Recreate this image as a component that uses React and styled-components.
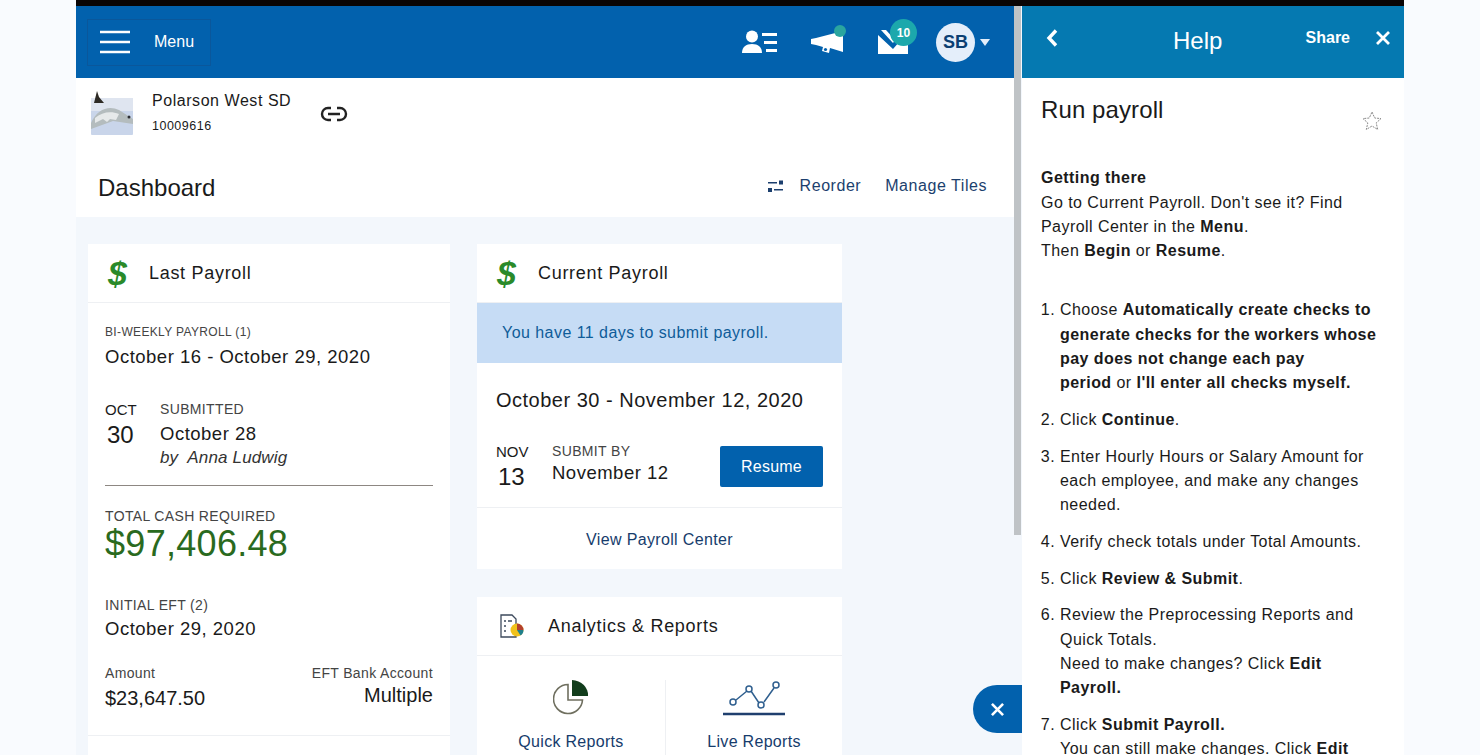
import React from 'react';
import styled, { createGlobalStyle } from 'styled-components';

const GlobalStyle = createGlobalStyle`
	html, body {
		margin: 0;
		height: 100%;
		overflow: hidden;
		background: #f9fbfe;
		font-family: 'Liberation Sans', Arial, sans-serif;
		color: #1a1a1a;
	}
	* {
		box-sizing: border-box;
	}
`;

const Frame = styled.div`
	position: relative;
	width: 1328px;
	height: 755px;
	margin-left: 76px;
	overflow: hidden;
	background: #f3f7fc;
`;
const TopStrip = styled.div`
	height: 6px;
	background: #0a0505;
`;
const Columns = styled.div`
	display: flex;
	height: 749px;
`;
const Main = styled.div`
	width: 938px;
	flex-shrink: 0;
`;
const ScrollTrack = styled.div`
	width: 8px;
	flex-shrink: 0;
	background: #f3f7fc;
`;
const ScrollThumb = styled.div`
	width: 7px;
	height: 529px;
	background: #bfc3c6;
`;

const Header = styled.header`
	display: flex;
	align-items: center;
	justify-content: space-between;
	height: 72px;
	padding: 0 24px 0 11px;
	background: #0261ad;
	color: #fff;
`;
const MenuButton = styled.div`
	display: flex;
	align-items: center;
	gap: 24px;
	width: 124px;
	height: 47px;
	padding-left: 12px;
	border: 1px solid #0a579b;
	font-size: 16px;
`;
const HeaderIcons = styled.div`
	display: flex;
	align-items: center;
`;
const IconSlot = styled.div`
	position: relative;
	display: flex;
	margin-right: ${(p) => p.$gap}px;
`;
const Badge = styled.span`
	position: absolute;
	top: -11px;
	right: -9px;
	display: flex;
	align-items: center;
	justify-content: center;
	width: 27px;
	height: 27px;
	border-radius: 50%;
	background: #1ca8ac;
	font-size: 12px;
	font-weight: bold;
`;
const Dot = styled.span`
	position: absolute;
	top: -6px;
	right: -3px;
	width: 12px;
	height: 12px;
	border-radius: 50%;
	background: #2aa59f;
`;
const Avatar = styled.div`
	display: flex;
	align-items: center;
	justify-content: center;
	width: 39px;
	height: 39px;
	margin-right: 5px;
	border-radius: 50%;
	background: #e4eefa;
	color: #0b3f73;
	font-size: 18px;
	font-weight: bold;
`;
const Caret = styled.span`
	width: 0;
	height: 0;
	border-left: 5px solid transparent;
	border-right: 5px solid transparent;
	border-top: 7px solid #e4eefa;
`;

const TitleBlock = styled.div`
	height: 139px;
	background: #fff;
`;
const Company = styled.div`
	display: flex;
	align-items: center;
	height: 72px;
	padding-left: 15px;
`;
const CompanyText = styled.div`
	margin-left: 19px;
	margin-right: 29px;
`;
const CompanyName = styled.div`
	margin-top: -3px;
	font-size: 16px;
	line-height: 20px;
	letter-spacing: 0.55px;
`;
const CompanyId = styled.div`
	margin-top: 7px;
	font-size: 12.5px;
	line-height: 16px;
	letter-spacing: 0.5px;
`;
const DashboardRow = styled.div`
	display: flex;
	align-items: center;
	justify-content: space-between;
	height: 67px;
	padding: 4px 27px 0 22px;
`;
const PageTitle = styled.h1`
	margin: 4px 0 0;
	font-size: 24px;
	font-weight: 400;
`;
const Actions = styled.div`
	display: flex;
	align-items: center;
	color: #1c3f6e;
	font-size: 16px;
	letter-spacing: 0.55px;
`;
const ActionLink = styled.span`
	margin-left: ${(p) => p.$left}px;
`;

const Board = styled.div`
	display: flex;
	align-items: flex-start;
	gap: 27px;
	padding: 27px 0 0 12px;
`;
const Stack = styled.div`
	display: flex;
	flex-direction: column;
	gap: 28px;
`;
const Card = styled.section`
	width: ${(p) => p.$width}px;
	background: #fff;
`;
const CardHead = styled.div`
	display: flex;
	align-items: center;
	gap: ${(p) => p.$gap || 21}px;
	height: 59px;
	padding-left: ${(p) => p.$left || 20}px;
	border-bottom: 1px solid #eef0f3;
	font-size: 18px;
	letter-spacing: 0.7px;
`;
const DollarSign = styled.span`
	width: 20px;
	font-size: 34px;
	font-weight: bold;
	font-style: italic;
	line-height: 38px;
	color: #2a8a2a;
	letter-spacing: 0;
`;
const Body = styled.div`
	padding: 21px 17px 0;
`;
const Caption = styled.div`
	margin-top: ${(p) => p.$top || 0}px;
	font-size: ${(p) => p.$size || 14}px;
	line-height: 16px;
	letter-spacing: 0.35px;
	color: #444;
`;
const DateLine = styled.div`
	margin-top: ${(p) => p.$top || 0}px;
	padding-left: ${(p) => p.$pad || 0}px;
	font-size: ${(p) => p.$size || 18.5}px;
	line-height: 24px;
	letter-spacing: 0.5px;
`;
const DateRow = styled.div`
	display: flex;
	align-items: flex-start;
	margin-top: ${(p) => p.$top || 0}px;
`;
const Day = styled.div`
	width: ${(p) => p.$width || 55}px;
	flex-shrink: 0;
`;
const Month = styled.div`
	font-size: 15px;
	line-height: 18px;
`;
const DayNumber = styled.div`
	margin-top: 2px;
	padding-left: 2px;
	font-size: 24px;
	line-height: 28px;
`;
const ByLine = styled.div`
	margin-top: 1px;
	font-size: 17px;
	font-style: italic;
	line-height: 22px;
	letter-spacing: 0.15px;
	color: #333;
`;
const Rule = styled.hr`
	margin: 16px 0 22px;
	border: 0;
	border-top: 1px solid #8d8782;
`;
const Total = styled.div`
	font-size: 36px;
	line-height: 40px;
	color: #2a6a1e;
	letter-spacing: 0.3px;
`;
const SplitRow = styled.div`
	display: flex;
	justify-content: space-between;
	margin-top: 24px;
	height: 70px;
`;
const RightCol = styled.div`
	text-align: right;
`;
const Amount = styled.div`
	margin-top: ${(p) => p.$top || 0}px;
	font-size: 20px;
	line-height: 24px;
`;
const Divider = styled.div`
	height: 1px;
	background: #eef0f3;
	margin-top: ${(p) => p.$top || 0}px;
`;
const LowerStub = styled.div`
	height: 30px;
`;
const Banner = styled.div`
	display: flex;
	align-items: center;
	height: 60px;
	padding-left: 25px;
	background: #c6dcf5;
	color: #0f5c99;
	font-size: 16px;
	letter-spacing: 0.45px;
`;
const SubmitRow = styled.div`
	display: flex;
	align-items: flex-start;
	justify-content: space-between;
	padding: 0 19px;
	margin-top: 31px;
`;
const SubmitInfo = styled.div`
	display: flex;
`;
const ResumeButton = styled.button`
	width: 103px;
	height: 41px;
	margin-top: 3px;
	border: 0;
	border-radius: 2px;
	background: #0261ad;
	color: #fff;
	font: inherit;
	font-size: 16px;
	letter-spacing: 0.2px;
`;
const CardLink = styled.div`
	display: flex;
	align-items: center;
	justify-content: center;
	height: 61px;
	padding-top: 2px;
	color: #163c6c;
	font-size: 16px;
	letter-spacing: 0.35px;
`;
const Reports = styled.div`
	display: grid;
	grid-template-columns: 188px 1fr;
	height: 100px;
	padding-top: 24px;
`;
const ReportCell = styled.div`
	display: flex;
	flex-direction: column;
	align-items: center;
	color: #163c6c;
	font-size: 16px;
	letter-spacing: 0.3px;
	border-left: ${(p) => (p.$line ? '1px solid #eef0f3' : '0')};
`;
const ReportLabel = styled.div`
	margin-top: 17px;
`;

const Help = styled.aside`
	width: 382px;
	flex-shrink: 0;
	background: #fff;
`;
const HelpHead = styled.div`
	position: relative;
	display: flex;
	align-items: center;
	justify-content: space-between;
	height: 72px;
	padding: 0 14px 8px 24px;
	background: #0579b1;
	color: #fff;
`;
const HelpTitle = styled.div`
	position: absolute;
	left: 151px;
	top: 21px;
	font-size: 24px;
`;
const HelpTools = styled.div`
	display: flex;
	align-items: center;
	gap: 26px;
	font-size: 16px;
	font-weight: bold;
`;
const HelpBody = styled.div`
	padding: 18px 19px 0;
	font-size: 16px;
	line-height: 24.3px;
	letter-spacing: 0.45px;
`;
const HelpTopic = styled.div`
	display: flex;
	justify-content: space-between;
`;
const TopicTitle = styled.h2`
	margin: 0;
	font-size: 24px;
	font-weight: 400;
	line-height: 28px;
	letter-spacing: 0.1px;
`;
const StarWrap = styled.div`
	margin: 15px 3px 0 0;
`;
const Intro = styled.p`
	margin: 28px 0 0;
`;
const Steps = styled.ol`
	margin: 35px 0 0;
	padding: 0 0 0 19px;
`;
const Step = styled.li`
	margin-bottom: 12.4px;
`;
const FloatClose = styled.div`
	position: absolute;
	left: 897px;
	top: 685px;
	display: flex;
	align-items: center;
	justify-content: center;
	width: 49px;
	height: 48px;
	border-radius: 24px 0 0 24px;
	background: #0261ad;
`;

const Burger = () => (
	<svg width="30" height="24" viewBox="0 0 30 24">
		<path d="M0 2h30M0 12h30M0 22h30" stroke="#fff" strokeWidth="2.6" />
	</svg>
);
const Thumb = () => (
	<svg width="42" height="46" viewBox="0 0 42 46">
		<rect y="7" width="42" height="37" rx="1" fill="#c9d5ea" />
		<rect y="7" width="42" height="13" fill="#dfe5f0" />
		<path d="M0 32c6-14 18-18 28-13l14 9v5L22 30 0 38z" fill="#b4bcbe" />
		<path d="M4 27c7-6 16-7 24-4l-3 6-6-1-3 3-4-3-8 4z" fill="#e6e9ea" />
		<circle cx="38" cy="26" r="1.5" fill="#2b2d33" />
		<path d="M6 0l2 6 5 6H3z" fill="#2d2a25" />
	</svg>
);
const LinkIcon = () => (
	<svg width="28" height="16" viewBox="0 0 28 16" fill="none" stroke="#222" strokeWidth="2.4">
		<path d="M11 2H8a6 6 0 0 0 0 12h3M17 2h3a6 6 0 0 1 0 12h-3M8 8h12" />
	</svg>
);
const PeopleIcon = () => (
	<svg width="36" height="24" viewBox="0 0 36 24" fill="#fff">
		<circle cx="10" cy="6.5" r="6" />
		<path d="M0 23c0-6 4-9 10-9s10 3 10 9z" />
		<path d="M20 3h15v3H20zM22 11h13v3H22zM24 19h11v3H24z" />
	</svg>
);
const MegaphoneIcon = () => (
	<svg width="32" height="22" viewBox="0 0 32 22" fill="#fff">
		<path d="M0 8l5-1 27-7v21L19 17l-1 5-7-2 1-4-7-2-5-1z" />
		<circle cx="14.5" cy="18.5" r="1.6" fill="#0261ad" />
	</svg>
);
const InboxIcon = () => (
	<svg width="30" height="24" viewBox="0 0 30 24" fill="#fff">
		<path d="M0 5l15 14 7-8h8v13H0z" />
		<path d="M3 0h5l9 10-2 3z" />
	</svg>
);
const ChevronLeft = () => (
	<svg width="12" height="18" viewBox="0 0 12 18" fill="none" stroke="#fff" strokeWidth="3.4">
		<path d="M10 1.5L3 9l7 7.5" />
	</svg>
);
const CloseIcon = ({ size = 14 }) => (
	<svg width={size} height={size} viewBox="0 0 14 14" stroke="#fff" strokeWidth="2.8">
		<path d="M1 1l12 12M13 1L1 13" />
	</svg>
);
const ReorderIcon = () => (
	<svg width="15" height="12" viewBox="0 0 15 12" fill="#1c3f6e">
		<path d="M0 2h9v1.6H0zM11 .5h4v4h-4zM0 8h4v4H0zM6 9h9v1.6H6z" />
	</svg>
);
const ReportDocIcon = () => (
	<svg width="24" height="24" viewBox="0 0 24 24" fill="none">
		<path d="M1 1h11l4 4v18H1z" fill="#fff" stroke="#3d4a5c" strokeWidth="1.3" />
		<path d="M4 7h2M8 7h4M4 12h2M4 17h2" stroke="#3d4a5c" strokeWidth="1.6" />
		<circle cx="17" cy="16" r="6.5" fill="#f1c21b" />
		<path d="M17 16V9.5a6.5 6.5 0 0 1 6.5 6.5z" fill="#b3402f" />
		<path d="M17 16h6.5a6.5 6.5 0 0 1-3 5.5z" fill="#1f7f8c" />
	</svg>
);
const PieIcon = () => (
	<svg width="36" height="36" viewBox="0 0 36 36" fill="none">
		<path d="M15 4.5A14.5 14.5 0 1 0 29.5 20H15z" stroke="#6f6f5f" strokeWidth="1.6" />
		<path d="M19 0a17 15 0 0 1 16 16H19z" fill="#123d1c" />
	</svg>
);
const LineChartIcon = () => (
	<svg width="66" height="36" viewBox="0 0 66 36" fill="none" stroke="#2f5f8f" strokeWidth="1.5">
		<path d="M15 20l11-9M30 11l8 12M43 22l10-14" />
		<circle cx="12" cy="22" r="3" />
		<circle cx="28" cy="9" r="3" />
		<circle cx="40" cy="25" r="3" />
		<circle cx="55" cy="5" r="3" />
		<path d="M2 34h62" stroke="#1f3f6e" strokeWidth="2.4" />
	</svg>
);
const StarIcon = () => (
	<svg width="20" height="20" viewBox="0 0 20 20" fill="none" stroke="#8a8a8a" strokeWidth="1" strokeDasharray="2 1">
		<path d="M10 1l2.7 6 6.3.6-4.8 4.3 1.5 6.6L10 15l-5.7 3.5 1.5-6.6L1 7.6 7.3 7z" />
	</svg>
);

export default function App() {
	return (
		<>
			<GlobalStyle />
			<Frame>
				<TopStrip />
				<Columns>
					<Main>
						<Header>
							<MenuButton>
								<Burger />
								Menu
							</MenuButton>
							<HeaderIcons>
								<IconSlot $gap={33}>
									<PeopleIcon />
								</IconSlot>
								<IconSlot $gap={35}>
									<MegaphoneIcon />
									<Dot />
								</IconSlot>
								<IconSlot $gap={28}>
									<InboxIcon />
									<Badge>10</Badge>
								</IconSlot>
								<Avatar>SB</Avatar>
								<Caret />
							</HeaderIcons>
						</Header>
						<TitleBlock>
							<Company>
								<Thumb />
								<CompanyText>
									<CompanyName>Polarson West SD</CompanyName>
									<CompanyId>10009616</CompanyId>
								</CompanyText>
								<LinkIcon />
							</Company>
							<DashboardRow>
								<PageTitle>Dashboard</PageTitle>
								<Actions>
									<ReorderIcon />
									<ActionLink $left={17}>Reorder</ActionLink>
									<ActionLink $left={24}>Manage Tiles</ActionLink>
								</Actions>
							</DashboardRow>
						</TitleBlock>
						<Board>
							<Card $width={362}>
								<CardHead>
									<DollarSign>$</DollarSign>
									Last Payroll
								</CardHead>
								<Body>
									<Caption $size={12}>BI-WEEKLY PAYROLL (1)</Caption>
									<DateLine $top={5}>October 16 - October 29, 2020</DateLine>
									<DateRow $top={32}>
										<Day>
											<Month>OCT</Month>
											<DayNumber>30</DayNumber>
										</Day>
										<div>
											<Caption>SUBMITTED</Caption>
											<DateLine $top={5}>October 28</DateLine>
											<ByLine>by&nbsp; Anna Ludwig</ByLine>
										</div>
									</DateRow>
									<Rule />
									<Caption>TOTAL CASH REQUIRED</Caption>
									<Total>$97,406.48</Total>
									<Caption $top={33}>INITIAL EFT (2)</Caption>
									<DateLine $top={4}>October 29, 2020</DateLine>
									<SplitRow>
										<div>
											<Caption>Amount</Caption>
											<Amount $top={5}>$23,647.50</Amount>
										</div>
										<RightCol>
											<Caption>EFT Bank Account</Caption>
											<Amount $top={2}>Multiple</Amount>
										</RightCol>
									</SplitRow>
								</Body>
								<Divider />
								<LowerStub />
							</Card>
							<Stack>
								<Card $width={365}>
									<CardHead>
										<DollarSign>$</DollarSign>
										Current Payroll
									</CardHead>
									<Banner>You have 11 days to submit payroll.</Banner>
									<DateLine $top={25} $size={20} $pad={19}>
										October 30 - November 12, 2020
									</DateLine>
									<SubmitRow>
										<SubmitInfo>
											<Day $width={56}>
												<Month>NOV</Month>
												<DayNumber>13</DayNumber>
											</Day>
											<div>
												<Caption>SUBMIT BY</Caption>
												<DateLine $top={2}>November 12</DateLine>
											</div>
										</SubmitInfo>
										<ResumeButton>Resume</ResumeButton>
									</SubmitRow>
									<Divider $top={16} />
									<CardLink>View Payroll Center</CardLink>
								</Card>
								<Card $width={365}>
									<CardHead $left={23} $gap={24}>
										<ReportDocIcon />
										Analytics &amp; Reports
									</CardHead>
									<Reports>
										<ReportCell>
											<PieIcon />
											<ReportLabel>Quick Reports</ReportLabel>
										</ReportCell>
										<ReportCell $line>
											<LineChartIcon />
											<ReportLabel>Live Reports</ReportLabel>
										</ReportCell>
									</Reports>
								</Card>
							</Stack>
						</Board>
					</Main>
					<ScrollTrack>
						<ScrollThumb />
					</ScrollTrack>
					<Help>
						<HelpHead>
							<ChevronLeft />
							<HelpTitle>Help</HelpTitle>
							<HelpTools>
								Share
								<CloseIcon />
							</HelpTools>
						</HelpHead>
						<HelpBody>
							<HelpTopic>
								<TopicTitle>Run payroll</TopicTitle>
								<StarWrap>
									<StarIcon />
								</StarWrap>
							</HelpTopic>
							<Intro>
								<b>Getting there</b>
								<br />
								Go to Current Payroll. Don't see it? Find
								<br />
								Payroll Center in the <b>Menu</b>.
								<br />
								Then <b>Begin</b> or <b>Resume</b>.
							</Intro>
							<Steps>
								<Step>
									Choose <b>Automatically create checks to</b>
									<br />
									<b>generate checks for the workers whose</b>
									<br />
									<b>pay does not change each pay</b>
									<br />
									<b>period</b> or <b>I'll enter all checks myself.</b>
								</Step>
								<Step>
									Click <b>Continue</b>.
								</Step>
								<Step>
									Enter Hourly Hours or Salary Amount for
									<br />
									each employee, and make any changes
									<br />
									needed.
								</Step>
								<Step>Verify check totals under Total Amounts.</Step>
								<Step>
									Click <b>Review &amp; Submit</b>.
								</Step>
								<Step>
									Review the Preprocessing Reports and
									<br />
									Quick Totals.
									<br />
									Need to make changes? Click <b>Edit</b>
									<br />
									<b>Payroll.</b>
								</Step>
								<Step>
									Click <b>Submit Payroll.</b>
									<br />
									You can still make changes. Click <b>Edit</b>
								</Step>
							</Steps>
						</HelpBody>
					</Help>
				</Columns>
				<FloatClose>
					<CloseIcon size={13} />
				</FloatClose>
			</Frame>
		</>
	);
}
